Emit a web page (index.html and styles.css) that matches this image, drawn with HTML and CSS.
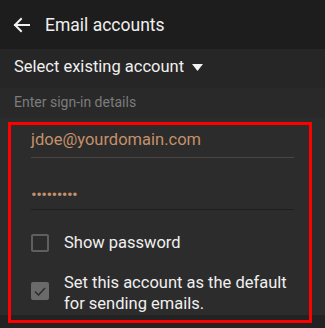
FILE: index.html
```html
<!DOCTYPE html>
<html>
<head>
<meta charset="utf-8">
<link rel="stylesheet" href="styles.css">
</head>
<body>
<div class="screen">
  <header class="appbar">
    <svg class="back" width="18" height="16" viewBox="0 0 18 16"><path d="M16 8H2M8 2L2 8L8 14" fill="none" stroke="#f2f2f2" stroke-width="2" stroke-linecap="square"/></svg>
    <span class="title">Email accounts</span>
  </header>
  <div class="select-row">
    <span>Select existing account</span>
    <svg class="caret" width="11" height="7" viewBox="0 0 11 7"><path d="M0 0H11L5.5 7Z" fill="#f2f2f2"/></svg>
  </div>
  <div class="section-label">Enter sign-in details</div>
  <div class="form">
    <div class="field email">jdoe@yourdomain.com</div>
    <div class="field password">•••••••••</div>
    <label class="check-row">
      <span class="box"></span>
      <span class="check-text">Show password</span>
    </label>
    <label class="check-row two">
      <span class="box checked"><svg width="12" height="9" viewBox="0 0 12 9"><path d="M1 4.5L4.5 8L11 1" fill="none" stroke="#2e2e2e" stroke-width="1.6"/></svg></span>
      <span class="check-text">Set this account as the default for sending emails.</span>
    </label>
  </div>
  <div class="bottom"></div>
  <div class="highlight"></div>
</div>
</body>
</html>
```

FILE: styles.css
```css
html, body {
  margin: 0;
  padding: 0;
  background: #1f1f1f;
}
.screen {
  position: relative;
  width: 325px;
  height: 328px;
  overflow: hidden;
  font-family: Roboto, "Noto Sans", sans-serif;
  color: #f0f0f0;
}
.appbar {
  height: 49px;
  background: #1d1d1d;
  display: flex;
  align-items: center;
  padding-left: 13px;
  box-sizing: border-box;
}
.back {
  margin-right: 14px;
  margin-top: 1px;
}
.title {
  font-size: 17.5px;
  margin-top: 1px;
}
.select-row {
  height: 39px;
  background: #262626;
  display: flex;
  align-items: center;
  padding-left: 14px;
  padding-bottom: 4px;
  box-sizing: border-box;
  font-size: 16.5px;
}
.caret {
  margin-left: 8px;
  margin-top: 1px;
}
.section-label {
  height: 30px;
  background: #292929;
  box-sizing: border-box;
  padding: 6px 0 0 14px;
  font-size: 14px;
  color: #7c7c7c;
}
.form {
  background: #2c2c2c;
  height: 197px;
  box-sizing: border-box;
  padding: 0 31px 0 31px;
  display: flex;
  flex-direction: column;
}
.field {
  color: #c4916a;
  font-size: 16.5px;
  border-bottom: 1px solid #4a4540;
  box-sizing: border-box;
}
.email {
  height: 40px;
  padding-top: 12px;
}
.password {
  height: 52px;
  padding-top: 27px;
  font-size: 17px;
  letter-spacing: -0.6px;
  line-height: 18px;
  border-bottom-color: #1e1e1e;
}
.check-row {
  display: flex;
  align-items: center;
  margin-top: 22px;
}
.check-row.two {
  margin-top: 19px;
}
.check-row.two .box {
  margin-top: -4px;
}
.box {
  flex: none;
  width: 18px;
  height: 18px;
  box-sizing: border-box;
  border: 2px solid #5f5f5f;
  border-radius: 2px;
  margin-right: 15px;
  display: flex;
  align-items: center;
  justify-content: center;
}
.box.checked {
  background: #6a6a6a;
  border-color: #6a6a6a;
}
.check-text {
  font-size: 16.5px;
  line-height: 21px;
  color: #f0f0f0;
}
.bottom {
  height: 13px;
  background: #222222;
}
.highlight {
  position: absolute;
  left: 8px;
  top: 122px;
  width: 304px;
  height: 201px;
  box-sizing: border-box;
  border: 3.5px solid #ff0000;
}
```
